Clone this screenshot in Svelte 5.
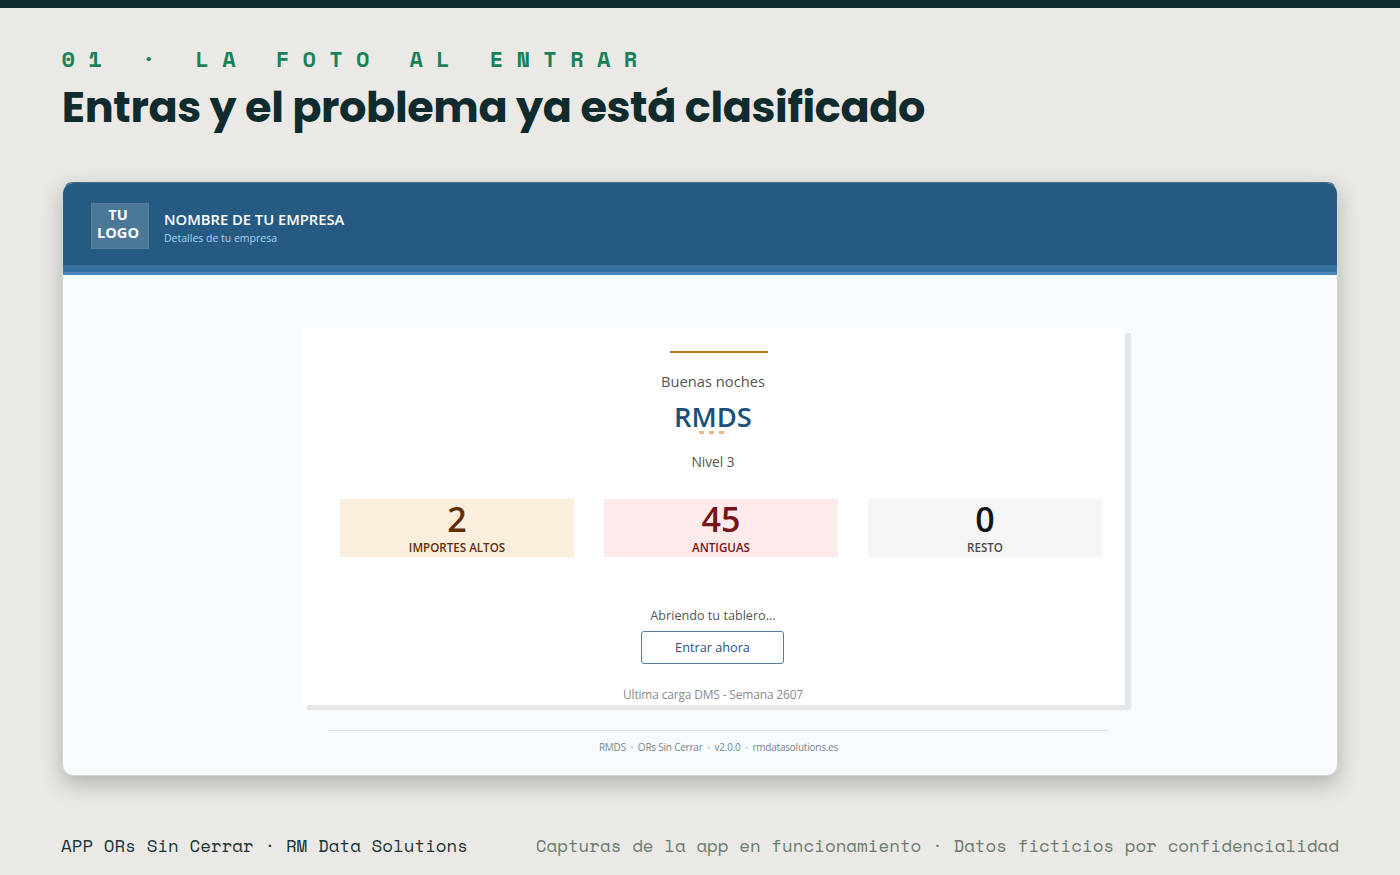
<script>
  const stats = [
    { value: 2, label: 'IMPORTES ALTOS', tone: 'amber' },
    { value: 45, label: 'ANTIGUAS', tone: 'red' },
    { value: 0, label: 'RESTO', tone: 'grey' }
  ];
</script>

<div class="slide">
  <header class="heading">
    <p class="kicker">01 · LA FOTO AL ENTRAR</p>
    <h1>Entras y el problema ya está clasificado</h1>
  </header>

  <main class="window">
    <div class="brand">
      <div class="logo">TU<br />LOGO</div>
      <div class="company">
        <strong>NOMBRE DE TU EMPRESA</strong>
        <span>Detalles de tu empresa</span>
      </div>
    </div>
    <div class="stripe"></div>

    <section class="card">
      <div class="rule"></div>
      <p class="greeting">Buenas noches</p>
      <p class="user">RMDS</p>
      <div class="dots"><i></i><i></i><i></i></div>
      <p class="level">Nivel 3</p>
      <div class="stats">
        {#each stats as stat}
          <div class="stat {stat.tone}">
            <b>{stat.value}</b>
            <span>{stat.label}</span>
          </div>
        {/each}
      </div>
      <p class="opening">Abriendo tu tablero...</p>
      <button>Entrar ahora</button>
      <p class="load">Ultima carga DMS - Semana 2607</p>
    </section>

    <div class="credits">RMDS &nbsp;·&nbsp; ORs Sin Cerrar &nbsp;·&nbsp; v2.0.0 &nbsp;·&nbsp; rmdatasolutions.es</div>
  </main>

  <footer>
    <span class="left">APP ORs Sin Cerrar · RM Data Solutions</span>
    <span class="right">Capturas de la app en funcionamiento · Datos ficticios por confidencialidad</span>
  </footer>
</div>

<style>
  :global(body) { margin: 0; background: #eae9e5; }
  p, h1 { margin: 0; }
  .slide {
    box-sizing: border-box;
    width: 1400px;
    height: 875px;
    overflow: hidden;
    padding: 0 62px;
    border-top: 8px solid #0f2b2e;
    background: #eae9e5;
    font-family: "Open Sans", sans-serif;
    display: flex;
    flex-direction: column;
    white-space: nowrap;
  }
  .heading { height: 174px; flex: none; }
  .kicker {
    padding-top: 36px;
    margin-left: -0.4px;
    font: 700 22px/30px "Space Mono", "Liberation Mono", monospace;
    letter-spacing: 13.3px;
    color: #178258;
  }
  h1 {
    padding-top: 5px;
    margin-left: -0.2px;
    font: 700 43px/56px Poppins, Inter, sans-serif;
    letter-spacing: -0.38px;
    color: #0f2b2e;
  }
  .window {
    box-sizing: border-box;
    flex: none;
    width: 1276px;
    height: 594px;
    border: 1px solid #d3d7d5;
    border-top-color: #4b7290;
    border-radius: 11px;
    overflow: hidden;
    background: #f7fbfe;
    box-shadow: 0 8px 22px rgba(40, 50, 40, 0.3);
    display: flex;
    flex-direction: column;
  }
  .brand {
    box-sizing: border-box;
    flex: none;
    height: 82px;
    padding: 20px 28px;
    background: #255a82;
    display: flex;
    gap: 15px;
  }
  .logo {
    box-sizing: border-box;
    width: 58px;
    height: 46px;
    padding: 1px 4px 0 0;
    border: 1px solid #5681a2;
    background: #4c7898;
    color: #fff;
    text-align: center;
    font-size: 14.6px;
    line-height: 18px;
    font-weight: 700;
  }
  .company { display: flex; flex-direction: column; color: #fff; padding-top: 6px; }
  .company strong { font-size: 14.75px; line-height: 20px; font-weight: 600; }
  .company span { font-size: 10.5px; line-height: 19px; color: #a9d4f5; }
  .stripe {
    box-sizing: border-box;
    flex: none;
    height: 10px;
    background: #33709f;
    border-bottom: 3px solid #4585b8;
  }
  .card {
    box-sizing: border-box;
    flex: none;
    width: 824px;
    height: 377px;
    margin: 53px 0 0 238px;
    background: #fff;
    box-shadow: 6px 5px 0 #e4e7ea;
    display: flex;
    flex-direction: column;
    align-items: center;
    padding-top: 23px;
  }
  .rule { width: 98px; height: 2px; margin-left: 12px; background: #b9771f; flex: none; }
  .greeting { margin-top: 18px; font-size: 14.7px; line-height: 20px; color: #555; }
  .user { margin-top: 8px; font-size: 27.4px; line-height: 36px; font-weight: 600; color: #1b4f7c; }
  .dots { display: flex; gap: 5px; height: 3px; margin: -4px 0 0 -4px; }
  .dots i { width: 5px; background: #e4b98c; }
  .level { margin-top: 18px; font-size: 13.7px; line-height: 20px; color: #555; }
  .stats {
    align-self: stretch;
    display: grid;
    grid-template-columns: repeat(3, 1fr);
    gap: 30px;
    margin: 27px 23px 0 39px;
  }
  .stat { height: 58px; display: flex; flex-direction: column; align-items: center; }
  .stat b { font-size: 34px; line-height: 40px; font-weight: 600; }
  .stat span { font-size: 11.6px; line-height: 18px; font-weight: 600; }
  .amber { background: #fbeedd; color: #5f2f08; }
  .red { background: #fdeaea; color: #761419; }
  .grey { background: #f5f5f5; color: #151515; }
  .grey span { color: #4b4b4b; }
  .opening { margin-top: 49px; font-size: 12.65px; line-height: 18px; color: #555; }
  button {
    box-sizing: border-box;
    width: 143px;
    height: 33px;
    margin: 7px 0 0 -1px;
    padding: 0 0 1px;
    border: 1px solid #4f7da3;
    border-radius: 3px;
    background: #fff;
    color: #255380;
    font: 12.7px/30px "Open Sans", sans-serif;
  }
  .load { margin-top: 22px; font-size: 12px; line-height: 18px; letter-spacing: -0.18px; color: #8b8b8b; }
  .credits {
    width: 781px;
    margin: 25px 0 0 265px;
    padding-top: 7px;
    border-top: 1px solid #dcdfe3;
    text-align: center;
    font-size: 10px;
    line-height: 18px;
    letter-spacing: -0.22px;
    color: #7b868b;
  }
  footer {
    display: flex;
    justify-content: space-between;
    margin: 57px -1px 0;
    font: 17.5px/24px "Space Mono", "Liberation Mono", monospace;
    color: #193437;
  }
  .right { color: #6b7b70; }
</style>
